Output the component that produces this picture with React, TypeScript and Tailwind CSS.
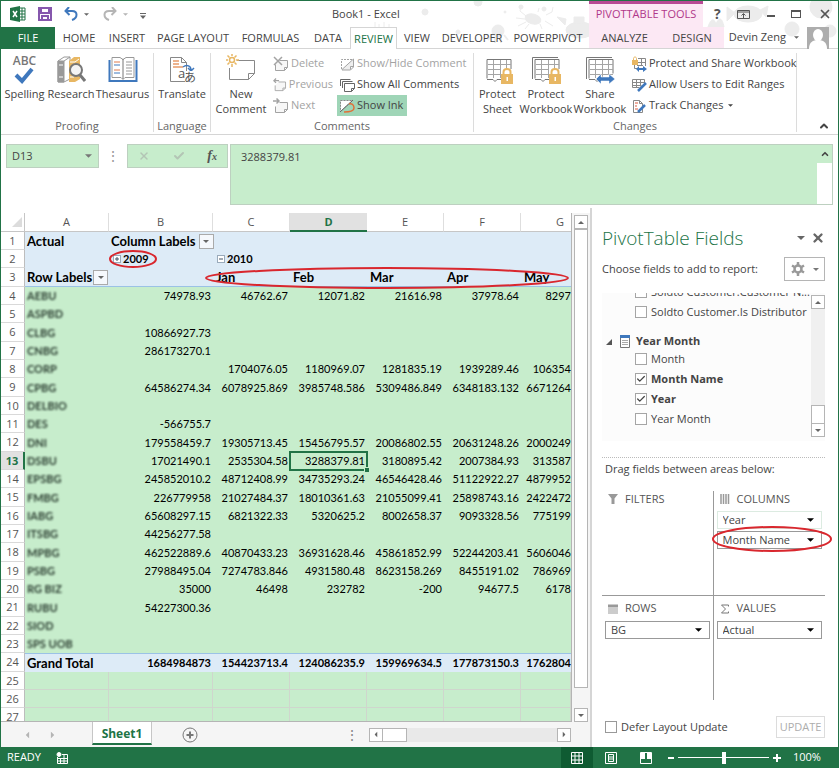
import type { ReactNode } from "react"
import { Check, ChevronUp, X } from "lucide-react"

const GREY = "#777"
const BLUE = "#3f78bd"
const GOLD = "#e8b763"

const TABS = [
  { name: "HOME", width: "w-12" },
  { name: "INSERT", width: "w-12" },
  { name: "PAGE LAYOUT", width: "w-[84px]" },
  { name: "FORMULAS", width: "w-[71px]" },
  { name: "DATA", width: "w-11" },
  { name: "REVIEW", width: "w-[47px]" },
  { name: "VIEW", width: "w-10" },
  { name: "DEVELOPER", width: "w-[70px]" },
  { name: "POWERPIVOT", width: "w-[82px]" },
]

const ROWS: string[][] = [
  ["AEBU", "74978.93", "46762.67", "12071.82", "21616.98", "37978.64", "8297"],
  ["ASPBD", "", "", "", "", "", ""],
  ["CLBG", "10866927.73", "", "", "", "", ""],
  ["CNBG", "286173270.1", "", "", "", "", ""],
  ["CORP", "", "1704076.05", "1180969.07", "1281835.19", "1939289.46", "106354"],
  ["CPBG", "64586274.34", "6078925.869", "3985748.586", "5309486.849", "6348183.132", "6671264"],
  ["DELBIO", "", "", "", "", "", ""],
  ["DES", "-566755.7", "", "", "", "", ""],
  ["DNI", "179558459.7", "19305713.45", "15456795.57", "20086802.55", "20631248.26", "2000249"],
  ["DSBU", "17021490.1", "2535304.58", "3288379.81", "3180895.42", "2007384.93", "313587"],
  ["EPSBG", "245852010.2", "48712408.99", "34735293.24", "46546428.46", "51122922.27", "4879952"],
  ["FMBG", "226779958", "21027484.37", "18010361.63", "21055099.41", "25898743.16", "2422472"],
  ["IABG", "65608297.15", "6821322.33", "5320625.2", "8002658.37", "9093328.56", "775199"],
  ["ITSBG", "44256277.58", "", "", "", "", ""],
  ["MPBG", "462522889.6", "40870433.23", "36931628.46", "45861852.99", "52244203.41", "5606046"],
  ["PSBG", "27988495.04", "7274783.846", "4931580.48", "8623158.269", "8455191.02", "786969"],
  ["RG BIZ", "35000", "46498", "232782", "-200", "94677.5", "6178"],
  ["RUBU", "54227300.36", "", "", "", "", ""],
  ["SIOD", "", "", "", "", "", ""],
  ["SPS UOB", "", "", "", "", "", ""],
]

const TOTALS = ["1684984873", "154423713.4", "124086235.9", "159969634.5", "177873150.3", "1762804"]

function Caret({ className = "h-1 w-2" }: { className?: string }) {
  return (
    <svg viewBox="0 0 8 4" className={`shrink-0 ${className}`} fill="currentColor">
      <path d="M0 0h8L4 4z" />
    </svg>
  )
}

function Doodles() {
  return (
    <svg
      viewBox="0 0 480 48"
      className="pointer-events-none absolute top-0 right-0 h-12 w-[480px]"
      fill="#ececec"
      stroke="#ececec"
    >
      <circle cx="67" cy="11" r="3" />
      <circle cx="120" cy="1" r="4" />
      <circle cx="147" cy="11" r="1" />
      <circle cx="100" cy="31" r="2" />
      <path d="M17 26v-5m4 5v-3m5 3v-5m5 5v-3" fill="none" />
      <circle cx="140" cy="30" r="6" />
      <path d="M134 34l-4 5m7-3v6m6-6v6m3-8l4 5" fill="none" strokeWidth="2" />
      <ellipse cx="175" cy="18" rx="8" ry="5" transform="rotate(15 175 18)" />
      <path d="M168 15l-6-5 1-5m4 13l-9-1m10 4l-8 4m11-2l-4 5m15-5l2 5m3-8l8 5m-7-11l6-3 1-5m-15 5l1-4" fill="none" />
      <circle cx="163" cy="6" r="2" />
      <circle cx="186" cy="8" r="2" />
      <ellipse cx="222" cy="29" rx="14" ry="8" />
      <path d="M216 22v-6h10v7zM207 24l-8-8 9 2z" />
      <ellipse cx="390" cy="13" rx="14" ry="8" />
      <path d="M377 12l-8-6v14zM402 9l8-4-2 11z" />
      <path d="M350 26c3-9 6-9 8-3 3-7 6-7 8 3z" />
      <circle cx="434" cy="28" r="7" />
      <circle cx="463" cy="6" r="11" />
      <circle cx="472" cy="30" r="6" />
    </svg>
  )
}

function TitleBar() {
  return (
    <div className="relative flex h-[26px] items-center">
      <div className="flex items-center pl-[9px]">
        <svg viewBox="0 0 16 16" className="h-4 w-4">
          <path d="M9 2h6v12H9z" fill="#fff" stroke="#217346" />
          <path d="M9 5h6M9 8h6M9 11h6M12 2v12" stroke="#217346" />
          <path d="M0 2l10-2v16L0 14z" fill="#217346" />
          <path d="M3 5l4 6M7 5l-4 6" stroke="#fff" strokeWidth="1.5" />
        </svg>
        <button aria-label="Save" className="ml-3">
          <svg viewBox="0 0 14 14" className="h-3.5 w-3.5" fill="none" stroke="#8657ad" strokeWidth="2">
            <path d="M1 1h12v12H1zM3 1v5h8V1M4 13V9h6v4" />
          </svg>
        </button>
        <button aria-label="Undo" className="ml-3">
          <svg viewBox="0 0 14 14" className="h-3.5 w-3.5" fill="none" stroke={BLUE} strokeWidth="2">
            <path d="M5 0L1.500 4l4 4M2 4h6c6 0 6 7 0 9" />
          </svg>
        </button>
        <Caret className="ml-1.5 h-[3px] w-[5px] text-[#666]" />
        <button aria-label="Redo" className="ml-3.5">
          <svg viewBox="0 0 14 14" className="h-3.5 w-3.5" fill="none" stroke="#b5b5b5" strokeWidth="2">
            <path d="M9 0l3.500 4-4 4M12 4H6c-6 0-6 7 0 9" />
          </svg>
        </button>
        <Caret className="ml-1.5 h-[3px] w-[5px] text-[#b5b5b5]" />
        <button aria-label="Customize Quick Access Toolbar" className="ml-3 text-[#666]">
          <svg viewBox="0 0 6 6" className="mt-1 h-1.5 w-1.5" fill="currentColor">
            <path d="M0 0h6v1H0zM0 2.500h6L3 6z" />
          </svg>
        </button>
      </div>
      <h1 className="flex-1 pt-px pl-[186px] text-[#444]">Book1 - Excel</h1>
      <div className="h-full w-[114px] border-t-[3px] border-[#b84a94] bg-[#fce8f4] text-center leading-5 text-[#b0388a]">
        PIVOTTABLE TOOLS
      </div>
      <div className="flex w-[135px] items-center justify-between pr-1.5 pl-[11px] text-[#555]">
        <button aria-label="Help" className="text-sm font-bold">?</button>
        <button aria-label="Ribbon Display Options">
          <svg viewBox="0 0 13 9" className="h-[9px] w-[13px]" fill="none" stroke="currentColor">
            <path d="M.5.5h12v8H.5zM.5 2h12M6.500 8V4M4.500 5.500l2-2 2 2" />
          </svg>
        </button>
        <button aria-label="Minimize" className="mt-1 h-0.5 w-2 bg-[#555]" />
        <button aria-label="Maximize" className="h-2 w-2.5 border border-t-2 border-[#555]" />
        <button aria-label="Close">
          <X className="h-3.5 w-3.5" strokeWidth={3} />
        </button>
      </div>
    </div>
  )
}

function TabStrip() {
  return (
    <nav className="relative flex h-[22px] border-b border-[#d5d5d5] text-[#444]">
      <button className="-mb-px w-[54px] bg-[#217346] text-white">FILE</button>
      {TABS.map((tab) => (
        <button
          key={tab.name}
          className={`${tab.width} pt-0.5 whitespace-nowrap ${
            tab.name === "REVIEW" ? "-mb-px border border-b-0 border-[#d5d5d5] bg-white text-[#217346]" : ""
          }`}
        >
          {tab.name}
        </button>
      ))}
      <button className="w-[71px] bg-[#fce8f4] pt-0.5">ANALYZE</button>
      <button className="w-16 bg-[#fce8f4] pt-0.5">DESIGN</button>
      <button className="flex flex-1 items-center justify-end gap-2 pr-[9px] whitespace-nowrap">
        Devin Zeng
        <Caret className="h-[3px] w-[5px] text-[#666]" />
        <svg viewBox="0 0 22 22" className="h-[22px] w-[22px] bg-[#adadad]" fill="#fff">
          <ellipse cx="11" cy="8" rx="5" ry="6" />
          <path d="M2 22c0-7 4-9 9-9s9 2 9 9z" />
        </svg>
      </button>
    </nav>
  )
}

function Group({ title, width, children }: { title: string; width: string; children: ReactNode }) {
  return (
    <section className={`${width} mt-1 mb-0.5 flex shrink-0 flex-col border-r border-[#dcdcdc]`}>
      <div className="flex min-h-0 flex-1">{children}</div>
      <h2 className="text-center leading-3 text-[#666]">{title}</h2>
    </section>
  )
}

function BigButton({ width, label, children }: { width: string; label: string; children: ReactNode }) {
  return (
    <button className={`${width} flex shrink-0 flex-col items-center pt-px`}>
      <span className="flex h-[30px] w-[30px] items-center justify-center">{children}</span>
      <span className="mt-0.5 leading-[15px]">{label}</span>
    </button>
  )
}

function SmallButton({
  label,
  icon,
  disabled = false,
  active = false,
}: {
  label: ReactNode
  icon: ReactNode
  disabled?: boolean
  active?: boolean
}) {
  return (
    <button
      disabled={disabled}
      className={`flex h-[21px] items-center gap-0.5 pr-1 pl-0.5 whitespace-nowrap ${
        disabled ? "text-[#a3a3a3]" : ""
      } ${active ? "bg-[#9fd5b7]" : ""}`}
    >
      {icon}
      {label}
    </button>
  )
}

function NoteIcon({ mark, color }: { mark: string; color: string }) {
  return (
    <svg viewBox="0 0 16 16" className="h-4 w-4" fill="none" stroke={color}>
      <path d="M6.500 4.500h8v7l-3 3h-9v-6M14.500 11.500h-3v3" fill="#f7f7f7" />
      <path d={mark} strokeWidth="1.500" />
    </svg>
  )
}

function SheetGrid({ double = false, children }: { double?: boolean; children: ReactNode }) {
  return (
    <svg viewBox="0 0 30 30" className="h-[30px] w-[30px]" fill="none" stroke="#a5a5a5">
      {double && <path d="M1.500 25V3.500H27" stroke={GREY} />}
      <path d="M4 24.500V5.500h24v14" fill="#fff" stroke={GREY} />
      <path d="M5 10.500h23M5 15.500h23M5 20.500h23M10.500 6v18M17.500 6v18M23.500 6v14" />
      <path d="M4 25.500h6l2 2 2-2h4" stroke={GREY} />
      {children}
    </svg>
  )
}

function Lock() {
  return (
    <g stroke="none">
      <path d="M18 15h12v15H18z" fill="#fff" />
      <path d="M18 20h12v10H18z" fill={GOLD} />
      <path d="M20.500 20v-2c0-4 7-4 7 0v2" fill="#fff" stroke={GOLD} strokeWidth="2" />
      <path d="M23.500 23h1.500v4h-1.500z" fill="#fff" />
    </g>
  )
}

function Ribbon() {
  return (
    <div className="relative flex h-[86px] border-b border-[#d5d5d5] bg-white text-[#444]">
      <Group title="Proofing" width="w-[153px]">
        <BigButton width="w-[47px]" label="Spelling">
          <span className="flex flex-col items-center text-[#777]">
            <span className="text-xs leading-3 font-semibold">ABC</span>
            <svg viewBox="0 0 20 17" className="h-[17px] w-5" fill="none" stroke={BLUE} strokeWidth="4">
              <path d="M2 8l6 6L18 2" />
            </svg>
          </span>
        </BigButton>
        <BigButton width="w-[46px]" label="Research">
          <svg viewBox="0 0 30 30" className="h-[30px] w-[30px]">
            <path d="M2 7l6-4h6v22l-6 3H2z" fill="#fff" stroke="#999" />
            <path d="M2 7h6v21H2zM8 7l6-4" fill="#999" stroke="#999" />
            <path d="M3 11h4M3 23h4" stroke="#fff" />
            <path d="M13 7l5-4h6v22l-5 3h-6z" fill={GOLD} />
            <path d="M14 8h5l4-3M14 23h4" stroke="#fff" fill="none" />
            <circle cx="20" cy="16" r="6" fill="#f4f4f4" stroke="#777" strokeWidth="2" />
            <path d="M24 21l5 6" stroke="#777" strokeWidth="3" />
          </svg>
        </BigButton>
        <BigButton width="w-[57px]" label="Thesaurus">
          <svg viewBox="0 0 30 30" className="h-[30px] w-[30px]" fill="none">
            <path d="M1.500 6v21h27V6" stroke={BLUE} strokeWidth="2" fill="#fff" />
            <path d="M4 3.500h8l3 2 3-2h8v20h-9l-2 2-2-2H4z" fill="#fff" stroke="#999" />
            <path d="M15 5v20" stroke="#777" />
            <path d="M6 8h6M6 16h6" stroke="#e07a4d" />
            <path d="M6 11h6M6 19h6" stroke={BLUE} />
            <path d="M18 8h6M18 11h6M18 14h6M18 17h6M18 20h6" stroke="#999" />
          </svg>
        </BigButton>
      </Group>
      <Group title="Language" width="w-[57px]">
        <BigButton width="w-full" label="Translate">
          <svg viewBox="0 0 30 30" className="h-[30px] w-[30px]" fill="none">
            <path d="M3.500 3.500h11l5 5v19h-16zM14.500 3.500v5h5" fill="#fff" stroke="#888" />
            <path d="M6 7h6M6 10h6M6 13h10" stroke="#e89a6a" strokeWidth="1.500" />
            <path d="M16 13c4-3 8-1 8 3m-3-2l3 3 3-3" stroke={BLUE} strokeWidth="1.500" />
            <path d="M11 14h8v11h-8zM18 17h12v12H18z" fill="#fff" />
            <text x="11" y="24" fontSize="13" fill="#555">a</text>
            <text x="17" y="28" fontSize="12" fill="#555" className="font-['Noto_Sans_CJK_JP']">あ</text>
          </svg>
        </BigButton>
      </Group>
      <Group title="Comments" width="w-[263px]">
        <BigButton width="w-[60px]" label="New Comment">
          <svg viewBox="0 0 30 30" className="h-[30px] w-[30px]" fill="none">
            <path d="M11 6.500h17.500v13l-6 6h-19V14M28.500 19.500h-6v6" stroke="#888" />
            <circle cx="6" cy="6" r="2.500" stroke={GOLD} strokeWidth="1.500" />
            <path d="M6 0v2M6 10v3M0 6h2M10 6h3M1.500 1.500l2 2M8.500 8.500l2 2M1.500 10.500l2-2M8.500 3.500l2-2" stroke={GOLD} strokeWidth="1.500" />
          </svg>
        </BigButton>
        <div className="flex w-[66px] shrink-0 flex-col">
          <SmallButton disabled label="Delete" icon={<NoteIcon color="#a3a3a3" mark="M1 1l8 8M9 1L1 9" />} />
          <SmallButton disabled label="Previous" icon={<NoteIcon color="#a3a3a3" mark="M7 3H1M3.500 .5L1 3l2.500 2.500" />} />
          <SmallButton disabled label="Next" icon={<NoteIcon color="#a3a3a3" mark="M0 3h6M3.500 .5L6 3 3.500 5.500" />} />
        </div>
        <div className="flex flex-1 flex-col items-start">
          <SmallButton
            disabled
            label="Show/Hide Comment"
            icon={
              <svg viewBox="0 0 16 16" className="h-4 w-4" fill="none" stroke="#a3a3a3">
                <path d="M2.500 13V3.500H13" strokeDasharray="2 1" />
                <path d="M3 13.500L14.500 3v8l-3 3H3zM14.500 10.500h-3v3" fill="#eee" />
              </svg>
            }
          />
          <SmallButton
            label="Show All Comments"
            icon={
              <svg viewBox="0 0 16 16" className="h-4 w-4" fill="none" stroke="#666">
                <path d="M1.500 9V2.500h10M3.500 11V4.500h10" />
                <path d="M5.500 6.500h10v5l-3 3h-7zM15.500 11.500h-3v3" fill="#fff" />
              </svg>
            }
          />
          <SmallButton
            active
            label="Show Ink"
            icon={
              <svg viewBox="0 0 16 16" className="h-4 w-4" fill="none">
                <path d="M1.500 2.500h12L1.500 13.500z" fill="#fff" stroke="#888" strokeDasharray="2 1" />
                <path d="M1 14L14 2" stroke="#666" />
                <path d="M10 6c3-1 5 1 5 4s-3 4-10 4" stroke="#e07038" strokeWidth="1.500" />
              </svg>
            }
          />
        </div>
      </Group>
      <Group title="Changes" width="w-[323px]">
        <BigButton width="w-[47px]" label="Protect Sheet">
          <SheetGrid>
            <Lock />
          </SheetGrid>
        </BigButton>
        <BigButton width="w-[50px]" label="Protect Workbook">
          <SheetGrid double>
            <Lock />
          </SheetGrid>
        </BigButton>
        <BigButton width="w-[58px]" label="Share Workbook">
          <SheetGrid double>
            <path d="M11 25l5-5v3h8v-3l6 5-6 5v-3h-8v3z" fill={BLUE} stroke="#fff" strokeWidth=".5" />
          </SheetGrid>
        </BigButton>
        <div className="flex flex-col">
          <SmallButton
            label="Protect and Share Workbook"
            icon={
              <svg viewBox="0 0 16 16" className="h-4 w-4" fill="none">
                <path d="M7 2.500h7.500V10M3.500 8v4.500H7M7 6.500h7M10.500 3v7M6 9.500h6" stroke="#888" />
                <path d="M1 4h6v5H1z" fill={GOLD} />
                <path d="M2.500 4V2.500c0-2 3-2 3 0V4" stroke={GOLD} />
                <path d="M5 13l3-3v2h4v-2l4 3-4 3v-2H8v2z" fill={BLUE} />
              </svg>
            }
          />
          <SmallButton
            label="Allow Users to Edit Ranges"
            icon={
              <svg viewBox="0 0 16 16" className="h-4 w-4" fill="none">
                <path d="M1.500 2.500h12v8h-12zM2 5.500h11M2 8.500h11M5.500 3v7M9.500 3v7" stroke="#888" />
                <path d="M7 15l1-4 5-5 3 3-5 5z" fill="#fff" />
                <path d="M7 14l8-8" stroke={BLUE} strokeWidth="2.500" />
              </svg>
            }
          />
          <SmallButton
            label={
              <span className="flex items-center gap-1">
                Track Changes <Caret className="h-[3px] w-[5px]" />
              </span>
            }
            icon={
              <svg viewBox="0 0 16 16" className="h-4 w-4" fill="none">
                <path d="M2.500 2.500h6l3 3v9h-9zM8.500 2.500v3h3" stroke="#888" />
                <path d="M4 5h3M4 8h2M4 11h3" stroke="#d9583c" />
                <path d="M7 14l7-7" stroke={BLUE} strokeWidth="2.500" />
              </svg>
            }
          />
        </div>
      </Group>
      <button aria-label="Collapse the Ribbon" className="mt-auto mr-2 mb-0.5 ml-auto">
        <ChevronUp className="h-3 w-3" strokeWidth={4} />
      </button>
    </div>
  )
}

function FormulaBar() {
  return (
    <div className="flex h-[69px] items-start pr-[5px] pl-[5px] pt-[9px] text-[#444]">
      <div className="flex h-6 w-[93px] items-center border border-[#bdd0c0] bg-[#c7edcc] pr-1.5">
        <input aria-label="Name Box" defaultValue="D13" className="w-full min-w-0 bg-transparent pl-[5px] outline-none" />
        <Caret className="h-1 w-[7px] text-[#777]" />
      </div>
      <span className="flex h-6 w-7 items-center justify-center text-sm text-[#999]">⋮</span>
      <div className="flex h-6 w-[101px] items-center justify-between border border-[#bdd0c0] bg-[#c7edcc] px-2.5">
        <button aria-label="Cancel" className="text-[#b3c5b5]">
          <X className="h-3 w-3" strokeWidth={3} />
        </button>
        <button aria-label="Enter" className="text-[#b3c5b5]">
          <Check className="h-3 w-3" strokeWidth={4} />
        </button>
        <button aria-label="Insert Function" className="font-['Liberation_Serif'] text-sm font-bold text-[#555] italic">
          f<span className="text-[10px]">x</span>
        </button>
      </div>
      <div className="ml-0.5 flex h-[61px] flex-1 border border-[#bdd0c0] bg-[#c7edcc]">
        <textarea
          aria-label="Formula Bar"
          defaultValue="3288379.81"
          className="flex-1 resize-none bg-transparent pt-1 pl-2.5 leading-4 outline-none"
        />
        <div className="flex w-[15px] flex-col">
          <button aria-label="Scroll up" className="flex h-[18px] items-center justify-center">
            <ChevronUp className="h-2.5 w-2.5" strokeWidth={4} />
          </button>
          <div className="flex-1 bg-white" />
        </div>
      </div>
    </div>
  )
}

function RowHead({ n }: { n: number }) {
  return (
    <th
      scope="row"
      className={`border-b border-b-[#d9d9d9] text-center font-['Open_Sans'] text-[11px] leading-4 ${
        n === 13
          ? "border-r-2 border-r-[#217346] bg-[#e1e1e1] font-bold text-[#217346]"
          : "border-r border-r-[#bdbdbd] bg-white font-normal text-[#555]"
      }`}
    >
      {n}
    </th>
  )
}

function FilterButton({ label }: { label: string }) {
  return (
    <button
      aria-label={label}
      className="flex h-[15px] w-[15px] items-center justify-center border border-[#aaa] bg-[#f5f8fc] text-[#666]"
    >
      <Caret className="h-[3px] w-1.5" />
    </button>
  )
}

function Toggle({ sign }: { sign: "+" | "−" }) {
  return (
    <button
      aria-label={sign === "+" ? "Expand" : "Collapse"}
      className="flex h-2 w-2 items-center justify-center border border-[#9ab] bg-white text-[#456]"
    >
      <svg viewBox="0 0 6 6" className="h-1.5 w-1.5" stroke="currentColor">
        <path d={sign === "+" ? "M1 3h4M3 1v4" : "M1 3h4"} />
      </svg>
    </button>
  )
}

function Worksheet() {
  return (
    <div className="relative min-h-0 flex-1 overflow-hidden border-r border-b border-[#b5b5b5] bg-white">
      <table className="w-full table-fixed border-separate border-spacing-0 font-['Lato'] text-black">
        <colgroup>
          <col className="w-6" />
          <col className="w-[84px]" />
          <col className="w-[104px]" />
          <col className="w-[77px]" />
          <col className="w-[77px]" />
          <col className="w-[77px]" />
          <col className="w-[77px]" />
          <col />
        </colgroup>
        <thead>
          <tr className="h-[19px] font-['Open_Sans'] text-[#555]">
            <th className="border-r border-b border-[#c6c6c6]">
              <svg viewBox="0 0 10 10" className="mr-0.5 ml-auto h-2.5 w-2.5" fill="#dcdcdc">
                <path d="M10 0v10H0z" />
              </svg>
            </th>
            {["A", "B", "C", "D", "E", "F", "G"].map((c) => (
              <th
                key={c}
                scope="col"
                className={
                  c === "D"
                    ? "border-b-2 border-[#217346] bg-[#e1e1e1] leading-4 font-bold text-[#217346]"
                    : `border-b border-[#c6c6c6] leading-4 font-normal ${c === "G" ? "pl-7" : "border-r border-r-[#dedede]"}`
                }
              >
                {c}
              </th>
            ))}
          </tr>
        </thead>
        <tbody className="[&_td]:leading-4 [&_td]:whitespace-nowrap [&>tr]:h-[18px] [&>tr:nth-child(3n)]:h-[19px]">
          <tr className="bg-[#ddebf7] text-[13px] font-bold">
            <RowHead n={1} />
            <td className="pl-0.5">Actual</td>
            <td className="pl-0.5" colSpan={2}>
              <div className="flex items-center gap-[3px]">
                Column Labels <FilterButton label="Filter columns" />
              </div>
            </td>
            <td colSpan={4} />
          </tr>
          <tr className="bg-[#ddebf7] font-bold">
            <RowHead n={2} />
            <td />
            <td className="pl-1">
              <div className="flex items-center gap-0.5">
                <Toggle sign="+" />
                2009
              </div>
            </td>
            <td className="pl-1">
              <div className="flex items-center gap-0.5">
                <Toggle sign="−" />
                2010
              </div>
            </td>
            <td colSpan={4} />
          </tr>
          <tr className="bg-[#ddebf7] text-[13px] font-bold">
            <RowHead n={3} />
            <td className="border-b border-[#9bc2e6] pl-0.5">
              <div className="flex items-center gap-px">
                Row Labels <FilterButton label="Filter rows" />
              </div>
            </td>
            <td className="border-b border-[#9bc2e6]" />
            {["Jan", "Feb", "Mar", "Apr", "May"].map((m) => (
              <td key={m} className="border-b border-[#9bc2e6] pl-[3px]">
                {m}
              </td>
            ))}
          </tr>
          {ROWS.map((row, i) => (
            <tr key={row[0]} className="bg-[#c7edcc]">
              <RowHead n={i + 4} />
              <td className="pl-0.5">
                <span className="font-bold text-[#2c3f32] blur-[1px]">{row[0]}</span>
              </td>
              {row.slice(1).map((value, c) => (
                <td
                  key={c}
                  className={`text-right ${c === 5 ? "" : "pr-0.5"} ${
                    i === 9 && c === 2 ? "relative outline-2 -outline-offset-1 outline-[#217346]" : ""
                  }`}
                >
                  {value}
                  {i === 9 && c === 2 && (
                    <span className="absolute -right-0.5 -bottom-0.5 h-[5px] w-[5px] border-t border-l border-[#c7edcc] bg-[#217346]" />
                  )}
                </td>
              ))}
            </tr>
          ))}
          <tr className="bg-[#ddebf7] font-bold">
            <RowHead n={24} />
            <td className="border-t border-[#9bc2e6] pl-0.5 text-[13px]">Grand Total</td>
            {TOTALS.map((value, c) => (
              <td key={value} className={`border-t border-[#9bc2e6] text-right ${c === 5 ? "" : "pr-0.5"}`}>
                {value}
              </td>
            ))}
          </tr>
          {[25, 26, 27].map((n) => (
            <tr key={n} className="bg-[#c7edcc]">
              <RowHead n={n} />
              {["A", "B", "C", "D", "E", "F", "G"].map((c) => (
                <td key={c} className="border-r border-b border-[#cfd6cd]" />
              ))}
            </tr>
          ))}
        </tbody>
      </table>
      <svg
        viewBox="0 0 571 100"
        className="pointer-events-none absolute top-0 left-0 h-[100px] w-[571px]"
        fill="none"
        stroke="#d9272e"
        strokeWidth="2"
      >
        <ellipse cx="132" cy="46" rx="23" ry="8" />
        <ellipse cx="386" cy="65" rx="181" ry="10" />
      </svg>
    </div>
  )
}

function ArrowButton({ label, rotate = "" }: { label: string; rotate?: string }) {
  return (
    <button
      aria-label={label}
      className="flex h-3.5 w-3.5 shrink-0 items-center justify-center border border-[#b5b5b5] bg-white text-[#666]"
    >
      <Caret className={`h-[3px] w-1.5 ${rotate}`} />
    </button>
  )
}

function SheetTabs() {
  return (
    <div className="flex h-[25px] items-center bg-[#f5f5f5]">
      <div className="flex w-[91px] items-center gap-[18px] pl-[23px] text-[#b5b5b5]">
        <button aria-label="Previous sheet">
          <Caret className="h-1 w-[7px] rotate-90" />
        </button>
        <button aria-label="Next sheet">
          <Caret className="h-1 w-[7px] -rotate-90" />
        </button>
      </div>
      <button className="mb-auto h-[23px] w-[60px] border-x border-b-2 border-x-[#c6c6c6] border-b-[#217346] bg-white pt-0.5 text-xs font-bold text-[#217346]">
        Sheet1
      </button>
      <button aria-label="New sheet" className="ml-[30px] text-[#777]">
        <svg viewBox="0 0 16 16" className="h-4 w-4" fill="none" stroke="currentColor">
          <circle cx="8" cy="8" r="7" />
          <path d="M4.500 8h7M8 4.500v7" strokeWidth="2" />
        </svg>
      </button>
      <span className="mr-2.5 ml-auto text-sm text-[#888]">⋮</span>
      <div className="flex w-[202px] bg-[#e9e9e9]">
        <ArrowButton label="Scroll left" rotate="rotate-90" />
        <div className="-ml-px w-[25px] border border-[#b5b5b5] bg-white" />
        <div className="flex-1" />
        <ArrowButton label="Scroll right" rotate="-rotate-90" />
      </div>
      <div className="w-[19px]" />
    </div>
  )
}

function FieldCheck({ label, checked = false }: { label: string; checked?: boolean }) {
  return (
    <label className={`flex h-5 shrink-0 items-center gap-1 pl-[33px] whitespace-nowrap ${checked ? "font-bold" : ""}`}>
      <span className="relative h-3 w-3 shrink-0">
        <input type="checkbox" defaultChecked={checked} className="peer block h-3 w-3 appearance-none border border-[#a5a5a5] bg-white" />
        <Check className="pointer-events-none absolute top-px left-px hidden h-2.5 w-2.5 peer-checked:block" strokeWidth={3} />
      </span>
      {label}
    </label>
  )
}

function AreaField({ name, soft = false }: { name: string; soft?: boolean }) {
  return (
    <div className="relative">
      <select
        aria-label={name}
        className={`block h-[18px] w-full appearance-none border bg-white pl-[5px] leading-4 outline-none ${
          soft ? "border-[#dcebe1]" : "border-[#999]"
        }`}
      >
        <option>{name}</option>
      </select>
      <Caret className="pointer-events-none absolute top-[7px] right-2 h-1 w-[7px] text-black" />
    </div>
  )
}

function Area({ title, icon, children }: { title: string; icon: ReactNode; children?: ReactNode }) {
  return (
    <div className="min-w-0 px-[3px]">
      <h3 className="flex h-4 items-center gap-[7px] pl-[3px] text-[#555]">
        <svg viewBox="0 0 10 10" className="h-2.5 w-2.5" fill="none" stroke="#999">
          {icon}
        </svg>
        {title}
      </h3>
      <div className="mt-1 flex flex-col gap-0.5">{children}</div>
    </div>
  )
}

function PivotPane() {
  return (
    <aside className="flex w-[248px] shrink-0 flex-col border-l-2 border-[#d5d5d5] pt-4 pr-[13px] pl-2.5 text-[#444]">
      <div className="flex h-7 items-center">
        <h2 className="flex-1 text-[19px] font-light text-[#217346]">PivotTable Fields</h2>
        <Caret className="mr-1.5 h-1 w-2 text-[#666]" />
        <button aria-label="Close pane" className="text-[#666]">
          <X className="h-3.5 w-3.5" strokeWidth={4} />
        </button>
      </div>
      <div className="mt-[5px] flex h-6 items-center justify-between">
        Choose fields to add to report:
        <button aria-label="Tools" className="flex h-6 w-[41px] items-center justify-center gap-2 border border-[#b5b5b5] text-[#777]">
          <svg viewBox="0 0 14 14" className="h-3.5 w-3.5" fill="none" stroke="#999">
            <circle cx="7" cy="7" r="3.500" strokeWidth="2.500" />
            <path d="M7 0v3M7 11v3M1 3.500l2.500 1.500M10.500 9l2.500 1.500M1 10.500L3.500 9M10.500 5L13 3.500" strokeWidth="2.500" />
          </svg>
          <Caret className="h-[3px] w-1.5" />
        </button>
      </div>
      <div className="mt-3 flex h-[148px] shrink-0 bg-[#fcfcfc]">
        <div className="flex min-w-0 flex-1 flex-col justify-end overflow-hidden pb-3">
          <FieldCheck label="Soldto Customer.Customer N..." />
          <FieldCheck label="Soldto Customer.Is Distributor" />
          <div className="mt-3 flex h-[15px] shrink-0 items-center gap-1 pl-1 font-bold">
            <svg viewBox="0 0 6 6" className="h-1.5 w-1.5" fill="#555">
              <path d="M6 0v6H0z" />
            </svg>
            <svg viewBox="0 0 10 13" className="mr-0.5 ml-1 h-[13px] w-2.5" fill="none">
              <path d="M.5.5h9v12h-9z" fill="#fff" stroke="#777" />
              <path d="M0 1.500h10" stroke={BLUE} strokeWidth="3" />
              <path d="M2 5.500h6M2 7.500h6M2 9.500h6" stroke="#aaa" />
            </svg>
            Year Month
          </div>
          <FieldCheck label="Month" />
          <FieldCheck label="Month Name" checked />
          <FieldCheck label="Year" checked />
          <FieldCheck label="Year Month" />
        </div>
        <div className="mt-0.5 mb-1 flex w-3.5 flex-col bg-[#f0f0f0]">
          <ArrowButton label="Scroll fields up" rotate="rotate-180" />
          <div className="flex-1" />
          <div className="-mb-px h-[19px] border border-[#b5b5b5] bg-white" />
          <ArrowButton label="Scroll fields down" />
        </div>
      </div>
      <div className="mt-4 border-t border-dotted border-[#bbb]" />
      <p className="mt-[3px] pl-[3px] leading-4">Drag fields between areas below:</p>
      <div className="relative mt-3.5 grid min-h-0 flex-1 grid-cols-2 grid-rows-2 [&>div]:border-[#999] [&>div:nth-child(-n+2)]:border-b [&>div:nth-child(n+3)]:pt-[5px] [&>div:nth-child(odd)]:border-r">
        <Area title="FILTERS" icon={<path d="M0 0h10L6.500 4.500V10h-3V4.500z" fill="#999" stroke="none" />} />
        <Area title="COLUMNS" icon={<path d="M1 0v10M3.500 0v10M6 0v10M8.500 0v10" strokeWidth="1.500" />}>
          <AreaField name="Year" soft />
          <AreaField name="Month Name" />
        </Area>
        <Area
          title="ROWS"
          icon={
            <>
              <path d="M0 2h10" strokeWidth="3" />
              <path d="M0 5h10M0 7h10M0 9h10" />
            </>
          }
        >
          <AreaField name="BG" />
        </Area>
        <Area title="VALUES" icon={<path d="M8.500 2.500V1h-7l4 4-4 4h7V7.500" stroke="#777" />}>
          <AreaField name="Actual" />
        </Area>
        <svg
          viewBox="0 0 122 26"
          className="pointer-events-none absolute top-[35px] -right-2 h-[26px] w-[122px]"
          fill="none"
          stroke="#d9272e"
          strokeWidth="2"
        >
          <ellipse cx="61" cy="13" rx="59" ry="12" />
        </svg>
      </div>
      <div className="mt-4 mb-[9px] flex h-[22px] items-center justify-between pl-[3px]">
        <label className="flex items-center gap-1">
          <input type="checkbox" className="h-3 w-3 appearance-none border border-[#999] bg-white" />
          Defer Layout Update
        </label>
        <button disabled className="h-[22px] w-[49px] border border-[#dcdcdc] text-[#adadad]">
          UPDATE
        </button>
      </div>
    </aside>
  )
}

function StatusBar() {
  return (
    <footer className="flex h-[21px] shrink-0 items-center bg-[#217346] text-white">
      <span className="pl-1.5">READY</span>
      <svg viewBox="0 0 12 12" className="ml-[15px] h-3 w-3" fill="none" stroke="#fff">
        <path d="M1.500 5v6.500h10v-9H6M2 6.500h9M2 9h9M4.500 6v5M8 3v8" />
        <circle cx="3" cy="2.500" r="2" fill="#fff" />
      </svg>
      <button aria-label="Normal view" className="ml-auto flex h-full w-8 items-center justify-center bg-[#0f5b32]">
        <svg viewBox="0 0 12 12" className="h-3 w-3" fill="none" stroke="#fff">
          <path d="M.5.5h11v11H.5zM.5 4h11M.5 8h11M4 .5v11M8 .5v11" />
        </svg>
      </button>
      <button aria-label="Page layout view" className="ml-3">
        <svg viewBox="0 0 12 12" className="h-3 w-3" fill="none" stroke="#fff">
          <path d="M.5.5h11v11H.5zM3.500 2.500h5v7h-5zM4 5h4M4 7h4" />
        </svg>
      </button>
      <button aria-label="Page break preview" className="ml-[23px]">
        <svg viewBox="0 0 12 12" className="h-3 w-3" fill="none" stroke="#fff">
          <path d="M.5.5h11v11H.5z" />
          <path d="M1 1h4v6H1zM7 1h4v6H7z" fill="#fff" stroke="none" />
        </svg>
      </button>
      <button aria-label="Zoom out" className="mr-1 ml-4 h-0.5 w-1.5 bg-white" />
      <input
        type="range"
        aria-label="Zoom"
        min={0}
        max={200}
        defaultValue={100}
        className="h-3 w-[91px] appearance-none bg-[linear-gradient(#fff,#fff)] bg-[length:100%_1px] bg-center bg-no-repeat [&::-webkit-slider-thumb]:h-3 [&::-webkit-slider-thumb]:w-1 [&::-webkit-slider-thumb]:appearance-none [&::-webkit-slider-thumb]:bg-white"
      />
      <button aria-label="Zoom in" className="ml-1">
        <svg viewBox="0 0 8 8" className="h-2 w-2" stroke="#fff" strokeWidth="2">
          <path d="M0 4h8M4 0v8" />
        </svg>
      </button>
      <span className="w-[57px] pl-3">100%</span>
    </footer>
  )
}

export default function App() {
  return (
    <div className="flex h-screen flex-col overflow-hidden border border-b-0 border-[#217346] bg-white font-['Open_Sans',sans-serif] text-[11px]">
      <header className="relative shrink-0">
        <Doodles />
        <TitleBar />
        <TabStrip />
        <Ribbon />
        <FormulaBar />
      </header>
      <main className="flex min-h-0 flex-1 pt-1">
        <div className="flex min-w-0 flex-1 flex-col pt-[5px]">
          <div className="flex min-h-0 flex-1">
            <Worksheet />
            <div className="flex w-[18px] flex-col items-center bg-[#f5f5f5] pt-0.5">
              <ArrowButton label="Scroll up" rotate="rotate-180" />
              <div className="w-3.5 flex-1 border border-[#b5b5b5] bg-white" />
              <div className="h-5" />
              <ArrowButton label="Scroll down" />
            </div>
          </div>
          <SheetTabs />
        </div>
        <PivotPane />
      </main>
      <StatusBar />
    </div>
  )
}
